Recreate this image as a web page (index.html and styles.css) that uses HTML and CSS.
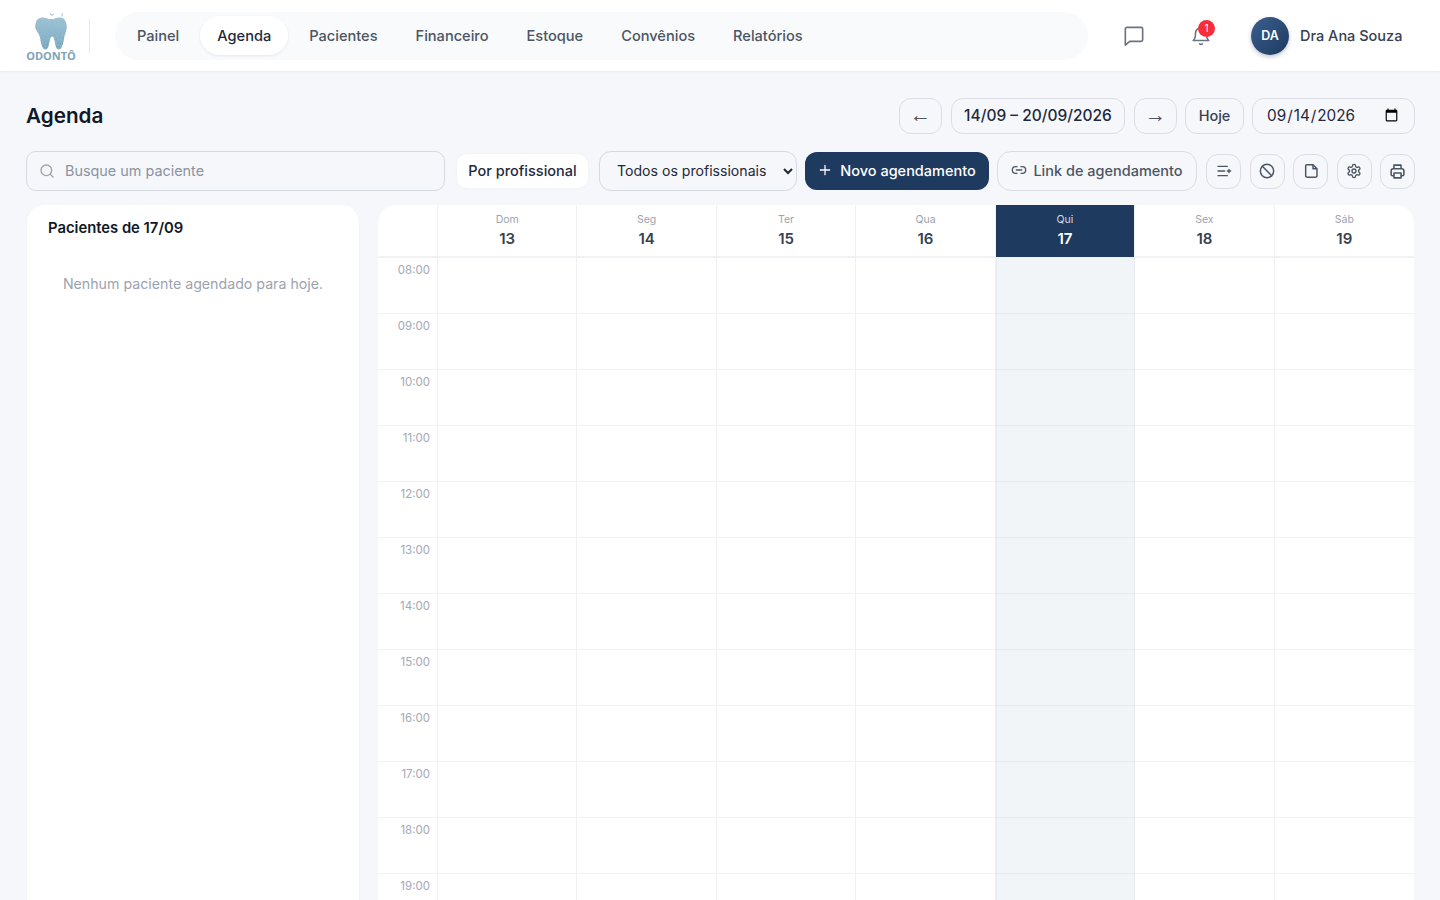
FILE: index.html
```html
<!DOCTYPE html>
<html lang="pt-BR">
<head>
    <meta charset="UTF-8">
    <meta name="viewport" content="width=device-width, initial-scale=1.0">
    <link rel="stylesheet" href="styles.css">
    <title>Agenda - Odontô</title>
</head>
<body>
    <header class="topbar">
        <div class="logo">
            <svg class="logo-tooth" width="36" height="38" viewBox="5 2 30 34">
                <defs>
                    <linearGradient id="toothGrad" x1="0" y1="0" x2="0" y2="1">
                        <stop offset="0" stop-color="#a3c6d6"/>
                        <stop offset="1" stop-color="#6ea3bd"/>
                    </linearGradient>
                    <filter id="toothNoise" x="0" y="0" width="100%" height="100%">
                        <feTurbulence type="fractalNoise" baseFrequency="0.7" numOctaves="2" seed="4" result="noise"/>
                        <feColorMatrix in="noise" type="matrix" values="0 0 0 0 0.3  0 0 0 0 0.5  0 0 0 0 0.62  0 0 0 3 -1.2" result="dots"/>
                        <feComposite in="dots" in2="SourceAlpha" operator="in" result="clipped"/>
                        <feMerge><feMergeNode in="SourceGraphic"/><feMergeNode in="clipped"/></feMerge>
                    </filter>
                </defs>
                <path filter="url(#toothNoise)" fill="url(#toothGrad)" d="M12 7c3 0 5 1.500 8 1.500S25 7 28 7c4 0 6 3.500 6 8.500 0 3-1.300 5.500-2 8.500-.8 3.500-1.500 11.500-5 11.500-3 0-3-5-4-8.500-.5-1.800-.9-3-2-3s-1.500 1.200-2 3C18 30.500 18 35.500 15 35.500 11.500 35.500 10.800 27.500 10 24c-.7-3-4-5.500-4-8.500C6 10.500 8 7 12 7z"/>
                <path fill="none" stroke="#a9cfe0" stroke-width="1" d="M19 3l1.500 2 2-1M30 3v3"/>
            </svg>
            <span class="logo-text">ODONTÔ</span>
        </div>
        <div class="topbar-divider"></div>
        <nav class="nav-pill">
            <a class="nav-item">Painel</a>
            <a class="nav-item active">Agenda</a>
            <a class="nav-item">Pacientes</a>
            <a class="nav-item">Financeiro</a>
            <a class="nav-item">Estoque</a>
            <a class="nav-item">Convênios</a>
            <a class="nav-item">Relatórios</a>
        </nav>
        <div class="topbar-right">
            <button class="top-icon">
                <svg width="26" height="26" viewBox="0 0 24 24" fill="none" stroke="#6b7280" stroke-width="1.500" stroke-linecap="round" stroke-linejoin="round"><path d="M4 5.500A1.500 1.500 0 0 1 5.500 4h13A1.500 1.500 0 0 1 20 5.500v10a1.500 1.500 0 0 1-1.500 1.500H8l-4 3.500z"/></svg>
            </button>
            <button class="top-icon bell">
                <svg width="22" height="22" viewBox="0 0 24 24" fill="none" stroke="#6b7280" stroke-width="1.700" stroke-linecap="round" stroke-linejoin="round"><path d="M18 9a6 6 0 1 0-12 0c0 6-2.500 8-2.500 8h17S18 15 18 9z"/><path d="M10.500 20.500a2 2 0 0 0 3 0"/></svg>
                <span class="badge">1</span>
            </button>
            <div class="avatar">DA</div>
            <span class="user-name">Dra Ana Souza</span>
        </div>
    </header>

    <main class="page">
        <div class="title-row">
            <h1>Agenda</h1>
            <div class="date-controls">
                <button class="btn-outline arrow">←</button>
                <button class="btn-outline range">14/09 – 20/09/2026</button>
                <button class="btn-outline arrow">→</button>
                <button class="btn-outline today">Hoje</button>
                <input class="date-input" type="date" value="2026-09-14">
            </div>
        </div>

        <div class="toolbar">
            <div class="search">
                <svg width="16" height="16" viewBox="0 0 24 24" fill="none" stroke="#9ca3af" stroke-width="2" stroke-linecap="round"><circle cx="11" cy="11" r="8"/><path d="M21 21l-4.300-4.300"/></svg>
                <input type="text" placeholder="Busque um paciente">
            </div>
            <button class="view-toggle">Por profissional</button>
            <select class="prof-select">
                <option>Todos os profissionais</option>
            </select>
            <button class="btn-primary">
                <svg width="14" height="14" viewBox="0 0 24 24" fill="none" stroke="#fff" stroke-width="2.200" stroke-linecap="round"><path d="M12 4v16M4 12h16"/></svg>
                Novo agendamento
            </button>
            <button class="btn-link">
                <svg width="16" height="16" viewBox="0 0 24 24" fill="none" stroke="#4b5563" stroke-width="2" stroke-linecap="round" stroke-linejoin="round"><path d="M9 17H7A5 5 0 0 1 7 7h2M15 7h2a5 5 0 0 1 0 10h-2M8 12h8"/></svg>
                Link de agendamento
            </button>
            <div class="icon-buttons">
                <button class="icon-btn">
                    <svg width="16" height="16" viewBox="0 0 24 24" fill="none" stroke="#4b5563" stroke-width="2" stroke-linecap="round"><path d="M3 5h14M3 12h10M3 19h14M17 12h5M19.500 9.500v5"/></svg>
                </button>
                <button class="icon-btn">
                    <svg width="16" height="16" viewBox="0 0 24 24" fill="none" stroke="#4b5563" stroke-width="2.200" stroke-linecap="round"><circle cx="12" cy="12" r="10"/><path d="M5 5l14 14"/></svg>
                </button>
                <button class="icon-btn">
                    <svg width="16" height="16" viewBox="0 0 24 24" fill="none" stroke="#4b5563" stroke-width="2.200" stroke-linejoin="round"><path d="M6 2.500h9l6 6V19a2.500 2.500 0 0 1-2.500 2.500h-12A2.500 2.500 0 0 1 4 19V4.500a2 2 0 0 1 2-2z"/><path d="M15 2.500v6h6"/></svg>
                </button>
                <button class="icon-btn">
                    <svg width="16" height="16" viewBox="0 0 24 24" fill="none" stroke="#4b5563" stroke-width="2" stroke-linecap="round" stroke-linejoin="round"><path d="M12.200 2h-.4a2 2 0 0 0-2 2v.2a2 2 0 0 1-1 1.700l-.4.300a2 2 0 0 1-2 0l-.2-.1a2 2 0 0 0-2.700.7l-.2.400a2 2 0 0 0 .7 2.700l.2.100a2 2 0 0 1 1 1.700v.5a2 2 0 0 1-1 1.800l-.2.100a2 2 0 0 0-.7 2.700l.2.400a2 2 0 0 0 2.700.7l.2-.1a2 2 0 0 1 2 0l.4.300a2 2 0 0 1 1 1.700v.2a2 2 0 0 0 2 2h.4a2 2 0 0 0 2-2v-.2a2 2 0 0 1 1-1.700l.4-.3a2 2 0 0 1 2 0l.2.100a2 2 0 0 0 2.700-.7l.2-.4a2 2 0 0 0-.7-2.700l-.2-.1a2 2 0 0 1-1-1.800v-.5a2 2 0 0 1 1-1.700l.2-.1a2 2 0 0 0 .7-2.700l-.2-.4a2 2 0 0 0-2.700-.7l-.2.100a2 2 0 0 1-2 0l-.4-.3a2 2 0 0 1-1-1.700V4a2 2 0 0 0-2-2z"/><circle cx="12" cy="12" r="3"/></svg>
                </button>
                <button class="icon-btn">
                    <svg width="17" height="17" viewBox="0 0 24 24" fill="none" stroke="#4b5563" stroke-width="2.200" stroke-linejoin="round"><path d="M7 8V3h10v5"/><path d="M7 18H5a2 2 0 0 1-2-2v-5a3 3 0 0 1 3-3h12a3 3 0 0 1 3 3v5a2 2 0 0 1-2 2h-2"/><path d="M7 14h10v7H7z"/></svg>
                </button>
            </div>
        </div>

        <div class="content">
            <aside class="patients-card">
                <h2>Pacientes de 17/09</h2>
                <p class="empty">Nenhum paciente agendado para hoje.</p>
            </aside>

            <section class="calendar">
                <div class="cal-head corner"></div>
                <div class="cal-head"><span>Dom</span><b>13</b></div>
                <div class="cal-head"><span>Seg</span><b>14</b></div>
                <div class="cal-head"><span>Ter</span><b>15</b></div>
                <div class="cal-head"><span>Qua</span><b>16</b></div>
                <div class="cal-head today-head"><span>Qui</span><b>17</b></div>
                <div class="cal-head"><span>Sex</span><b>18</b></div>
                <div class="cal-head"><span>Sáb</span><b>19</b></div>

                <div class="hour">08:00</div><div class="slot"></div><div class="slot"></div><div class="slot"></div><div class="slot"></div><div class="slot today-col"></div><div class="slot"></div><div class="slot"></div>
                <div class="hour">09:00</div><div class="slot"></div><div class="slot"></div><div class="slot"></div><div class="slot"></div><div class="slot today-col"></div><div class="slot"></div><div class="slot"></div>
                <div class="hour">10:00</div><div class="slot"></div><div class="slot"></div><div class="slot"></div><div class="slot"></div><div class="slot today-col"></div><div class="slot"></div><div class="slot"></div>
                <div class="hour">11:00</div><div class="slot"></div><div class="slot"></div><div class="slot"></div><div class="slot"></div><div class="slot today-col"></div><div class="slot"></div><div class="slot"></div>
                <div class="hour">12:00</div><div class="slot"></div><div class="slot"></div><div class="slot"></div><div class="slot"></div><div class="slot today-col"></div><div class="slot"></div><div class="slot"></div>
                <div class="hour">13:00</div><div class="slot"></div><div class="slot"></div><div class="slot"></div><div class="slot"></div><div class="slot today-col"></div><div class="slot"></div><div class="slot"></div>
                <div class="hour">14:00</div><div class="slot"></div><div class="slot"></div><div class="slot"></div><div class="slot"></div><div class="slot today-col"></div><div class="slot"></div><div class="slot"></div>
                <div class="hour">15:00</div><div class="slot"></div><div class="slot"></div><div class="slot"></div><div class="slot"></div><div class="slot today-col"></div><div class="slot"></div><div class="slot"></div>
                <div class="hour">16:00</div><div class="slot"></div><div class="slot"></div><div class="slot"></div><div class="slot"></div><div class="slot today-col"></div><div class="slot"></div><div class="slot"></div>
                <div class="hour">17:00</div><div class="slot"></div><div class="slot"></div><div class="slot"></div><div class="slot"></div><div class="slot today-col"></div><div class="slot"></div><div class="slot"></div>
                <div class="hour">18:00</div><div class="slot"></div><div class="slot"></div><div class="slot"></div><div class="slot"></div><div class="slot today-col"></div><div class="slot"></div><div class="slot"></div>
                <div class="hour">19:00</div><div class="slot"></div><div class="slot"></div><div class="slot"></div><div class="slot"></div><div class="slot today-col"></div><div class="slot"></div><div class="slot"></div>
            </section>
        </div>
    </main>
</body>
</html>
```

FILE: styles.css
```css
* {
    box-sizing: border-box;
}
html, body {
    margin: 0;
    height: 100%;
    overflow: hidden;
}
body {
    background-color: #f5f7fb;
    color: #1f2937;
    font-family: Inter, "Noto Sans", sans-serif;
    font-size: 15px;
}
button, input, select {
    font-family: inherit;
}

/* topo */
.topbar {
    height: 71px;
    background-color: #fff;
    box-shadow: 0 1px 3px rgba(15, 23, 42, 0.06);
    display: flex;
    align-items: center;
    padding: 0 26px;
}
.logo {
    width: 50px;
    display: flex;
    flex-direction: column;
    align-items: center;
    margin-top: 2px;
}
.logo-text {
    font-family: "Open Sans", sans-serif;
    font-size: 11px;
    line-height: 12px;
    font-weight: 700;
    color: #7fa3b5;
    letter-spacing: 0;
}
.topbar-divider {
    width: 1px;
    height: 34px;
    margin: 0 25px 0 13px;
    background-color: #e5e7eb;
}
.nav-pill {
    width: 973px;
    height: 48px;
    border-radius: 24px;
    background-color: #f8fafc;
    display: flex;
    align-items: center;
    gap: 4px;
    padding: 0 5px 0 5px;
}
.nav-item {
    height: 39px;
    line-height: 41px;
    padding: 0 17px;
    border-radius: 20px;
    font-size: 14.6px;
    font-weight: 500;
    color: #4b5563;
}
.nav-item.active {
    background-color: #fff;
    color: #1e293b;
    box-shadow: 0 1px 3px rgba(15, 23, 42, 0.08);
}
.topbar-right {
    display: flex;
    align-items: center;
    margin-left: 24px;
}
.top-icon {
    position: relative;
    width: 44px;
    height: 44px;
    border: none;
    background: none;
    padding: 0;
    display: flex;
    align-items: center;
    justify-content: center;
    margin-right: 23px;
}
.top-icon.bell {
    margin-right: 28px;
}
.badge {
    position: absolute;
    top: 6px;
    left: 19px;
    width: 17px;
    height: 17px;
    border-radius: 50%;
    background-color: #f92c3a;
    color: #fff;
    font-size: 10px;
    line-height: 17px;
    text-align: center;
}
.avatar {
    width: 38px;
    height: 38px;
    border-radius: 50%;
    background: linear-gradient(135deg, #3a5f8f, #1e3a5f);
    box-shadow: 0 2px 4px rgba(15, 23, 42, 0.25);
    color: #fff;
    font-size: 12.5px;
    font-weight: 600;
    line-height: 38px;
    text-align: center;
}
.user-name {
    margin-left: 11px;
    font-size: 14.5px;
    font-weight: 500;
    color: #374151;
    white-space: nowrap;
}

/* obsah */
.page {
    padding: 27px 25px 0 26px;
}
.title-row {
    display: flex;
    justify-content: space-between;
    align-items: center;
    height: 36px;
    margin-bottom: 17px;
}
h1 {
    margin: 0 0 2px;
    font-size: 20.7px;
    font-weight: 600;
    color: #111827;
}
.date-controls {
    display: flex;
    gap: 8px;
}
.btn-outline {
    height: 36px;
    border: 1px solid #d9dde3;
    border-radius: 12px;
    background: transparent;
    font-size: 15px;
    color: #1e293b;
    padding: 0 12px 2px;
}
.btn-outline.arrow {
    width: 43px;
    padding: 0 0 2px;
    font-family: "Liberation Sans", sans-serif;
    font-size: 21px;
    color: #4b5563;
}
.btn-outline.range {
    width: 174px;
    font-size: 15.500px;
    font-weight: 500;
    margin: 0 1px;
}
.btn-outline.today {
    width: 59px;
    color: #374151;
    font-weight: 500;
    font-size: 14.5px;
}
.date-input {
    width: 163px;
    height: 36px;
    border: 1px solid #d9dde3;
    border-radius: 12px;
    background: transparent;
    font-size: 15.300px;
    color: #1e293b;
    padding: 0 13px 1px;
}

.toolbar {
    display: flex;
    align-items: center;
    height: 40px;
    margin-bottom: 14px;
}
.search {
    flex: 0 0 419px;
    height: 40px;
    border: 1px solid #d5d9e0;
    border-radius: 10px;
    display: flex;
    align-items: center;
    gap: 10px;
    padding: 0 12px;
}
.search input {
    flex: 1;
    border: none;
    outline: none;
    background: transparent;
    padding: 0 0 2px;
    font-size: 14.4px;
}
.search input::placeholder {
    color: #8b93a1;
}
.view-toggle {
    width: 131px;
    height: 34px;
    margin-left: 12px;
    border: none;
    border-radius: 10px;
    background-color: #fff;
    padding-bottom: 2px;
    font-size: 14.5px;
    font-weight: 500;
    color: #1e293b;
    box-shadow: 0 0 3px rgba(15, 23, 42, 0.04);
}
.prof-select {
    width: 198px;
    height: 40px;
    margin-left: 11px;
    border: 1px solid #d5d9e0;
    border-radius: 12px;
    background-color: transparent;
    padding: 0 12px 2px 13px;
    font-size: 14.100px;
    color: #1f2937;
}
.btn-primary {
    width: 184px;
    height: 38px;
    margin-left: 8px;
    border: none;
    border-radius: 12px;
    background-color: #1e3a5f;
    color: #fff;
    padding: 0 0 2px;
    font-size: 14.5px;
    font-weight: 500;
    display: flex;
    align-items: center;
    justify-content: center;
    gap: 8px;
}
.btn-link {
    width: 200px;
    height: 40px;
    margin-left: 8px;
    border: 1px solid #d9dde3;
    border-radius: 14px;
    background: transparent;
    color: #4b5563;
    padding: 0 0 2px;
    font-size: 14.5px;
    font-weight: 500;
    display: flex;
    align-items: center;
    justify-content: center;
    gap: 6px;
}
.icon-buttons {
    display: flex;
    gap: 8.500px;
    margin-left: 9px;
}
.icon-btn {
    width: 35px;
    height: 35px;
    border: 1px solid #d9dde3;
    border-radius: 12px;
    background: transparent;
    padding: 0;
    display: flex;
    align-items: center;
    justify-content: center;
}

.content {
    display: flex;
    gap: 18px;
    align-items: flex-start;
    margin-right: 1px;
}
.patients-card {
    width: 334px;
    height: 760px;
    flex-shrink: 0;
    background-color: #fff;
    border: 1px solid #f2f3f7;
    border-top: none;
    border-radius: 18px;
    padding: 14px 21px;
}
.patients-card h2 {
    margin: 0;
    font-size: 14.8px;
    line-height: 18px;
    font-weight: 600;
    color: #111827;
}
.empty {
    margin: 37px 0 0;
    text-align: center;
    font-size: 14.200px;
    line-height: 20px;
    color: #9ca3af;
}

/* kalendar */
.calendar {
    flex: 1;
    display: grid;
    grid-template-columns: 60px repeat(7, 1fr);
    grid-auto-rows: 56px;
    grid-template-rows: 53px;
    background-color: #fff;
    border-radius: 18px 18px 0 0;
    overflow: hidden;
}
.cal-head {
    display: flex;
    flex-direction: column;
    align-items: center;
    padding-top: 8px;
    border-right: 1px solid #f0f1f4;
    border-bottom: 2px solid #f0f1f4;
}
.cal-head:nth-child(8) {
    border-right: none;
}
.cal-head span {
    font-size: 10.5px;
    line-height: 13px;
    color: #9ca3af;
}
.cal-head b {
    margin-top: 3px;
    font-size: 15px;
    line-height: 20px;
    font-weight: 600;
    color: #374151;
}
.today-head {
    background-color: #1e3a5f;
    border-bottom-width: 1px;
}
.today-head span {
    color: #d4dbe4;
}
.today-head b {
    color: #fff;
}
.hour {
    padding: 5px 7px 0 0;
    text-align: right;
    font-size: 11.5px;
    line-height: 14px;
    color: #a3a9b5;
    border-right: 1px solid #f0f1f4;
    border-bottom: 1px solid #f0f1f4;
}
.slot {
    border-right: 1px solid #f0f1f4;
    border-bottom: 1px solid #f0f1f4;
}
.slot:nth-child(8n) {
    border-right: none;
}
.today-col {
    background-color: #f2f5f8;
    border-right-color: #e6eaef;
    border-bottom-color: #e6eaef;
    border-left: 1px solid #e6eaef;
}
```
